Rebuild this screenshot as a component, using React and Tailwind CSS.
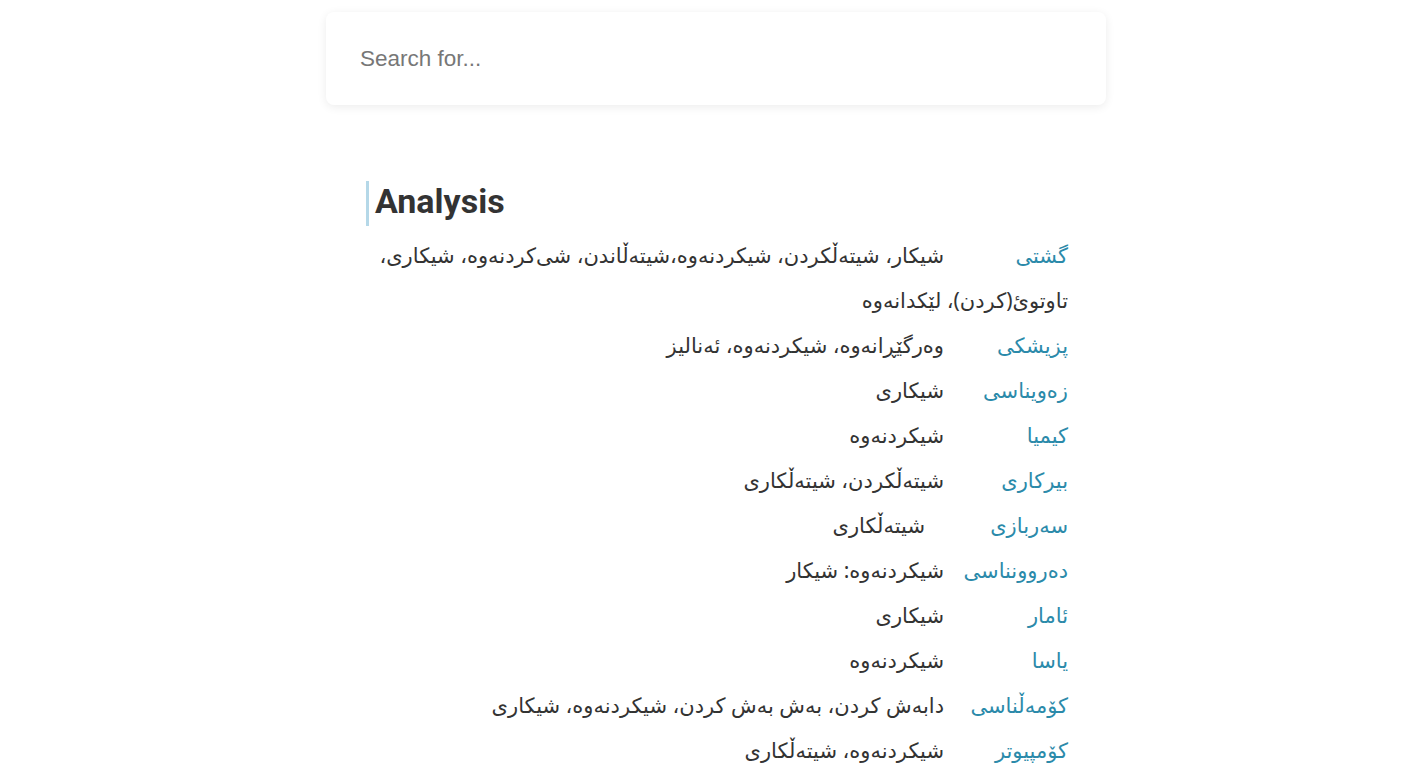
import React from "react";

const rows = [
  { label: "گشتی", value: "شیکار، شیتەڵکردن، شیکردنەوە،شیتەڵاندن، شی‌کردنەوە، شیکاری، تاوتویٔ(کردن)، لێکدانەوە" },
  { label: "پزیشکی", value: "وەرگێڕانەوە، شیکردنەوە، ئەنالیز" },
  { label: "زەویناسی", value: "شیکاری" },
  { label: "کیمیا", value: "شیکردنەوە" },
  { label: "بیرکاری", value: "شیتەڵکردن، شیتەڵکاری" },
  { label: "سەربازی", value: "شیتەڵکاری", indent: true },
  { label: "دەروونناسی", value: "شیکردنەوە: شیکار" },
  { label: "ئامار", value: "شیکاری" },
  { label: "یاسا", value: "شیکردنەوە" },
  { label: "کۆمەڵناسی", value: "دابەش کردن، بەش بەش کردن، شیکردنەوە، شیکاری" },
  { label: "کۆمپیوتر", value: "شیکردنەوە، شیتەڵکاری" },
];

export default function App() {
  return (
    <div className="min-h-screen bg-white">
      <div className="ml-[326px] w-[780px] pt-3">
        {/* search */}
        <div className="h-[93px] rounded-lg bg-white shadow-[0_2px_10px_rgba(0,0,0,0.08)] flex items-center px-[34px]">
          <input
            type="text"
            placeholder="Search for..."
            className="w-full bg-transparent outline-none text-[22.5px] text-[#555] placeholder:text-[#777] font-['Liberation_Sans',Arial,sans-serif]"
          />
        </div>

        {/* result */}
        <div className="mt-[76px] pl-10 pr-[38px]">
          <h2 className="border-l-[3px] border-[#b5d8e8] pl-[6px] pb-[4px] h-[45px] flex items-center text-[34px] font-bold text-[#333] font-['Roboto',sans-serif]">
            Analysis
          </h2>
          <div dir="rtl" className="mt-[7px] font-['Noto_Sans','DejaVu_Sans',sans-serif] text-[21px] leading-[45px] text-[#333]">
            {rows.map((r) => (
              <div key={r.label}>
                <span className="inline-block w-[124px] text-[#2b8aaa]">{r.label}</span>
                <span className={r.indent ? "pr-[19px]" : ""}>{r.value}</span>
              </div>
            ))}
          </div>
        </div>
      </div>
    </div>
  );
}
